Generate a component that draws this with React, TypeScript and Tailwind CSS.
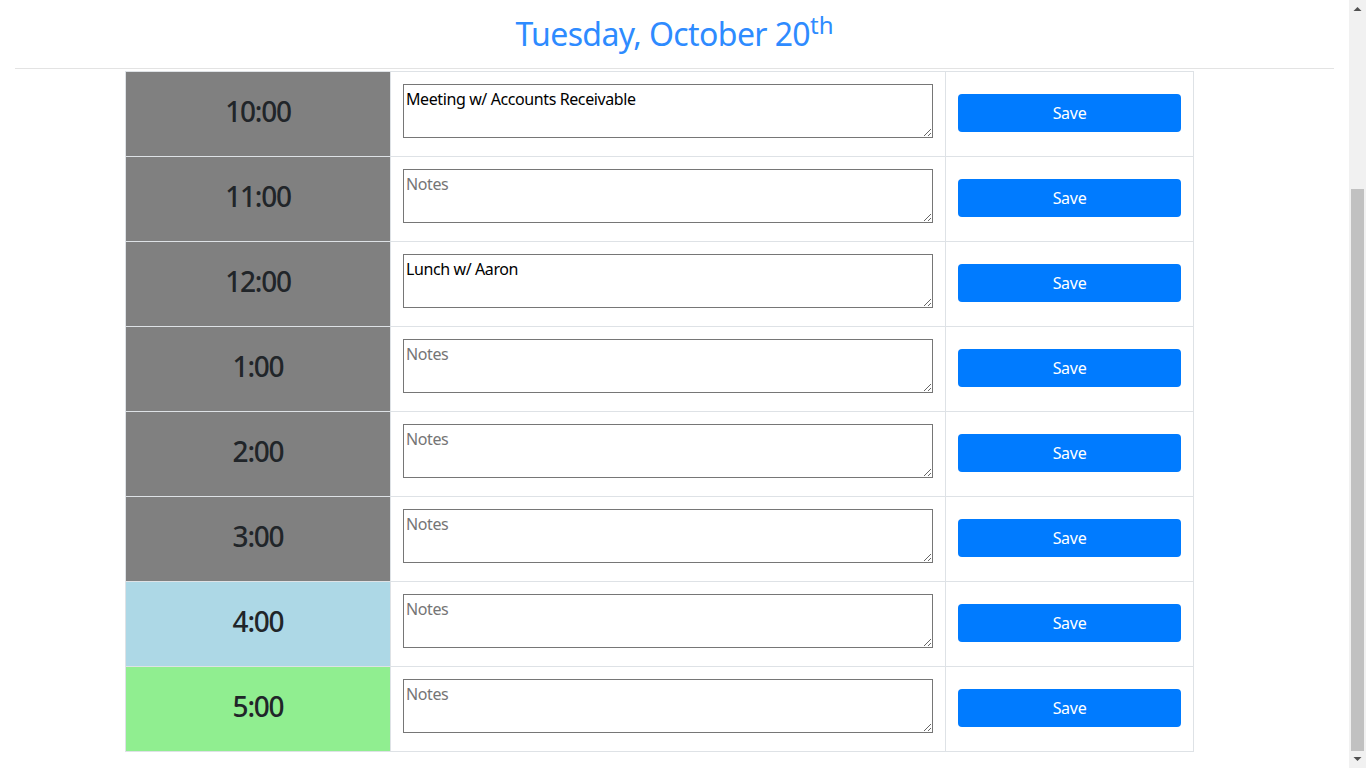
import React from "react";

type Row = { time: string; note: string; state: "past" | "present" | "future" };

const rows: Row[] = [
  { time: "10:00", note: "Meeting w/ Accounts Receivable", state: "past" },
  { time: "11:00", note: "", state: "past" },
  { time: "12:00", note: "Lunch w/ Aaron", state: "past" },
  { time: "1:00", note: "", state: "past" },
  { time: "2:00", note: "", state: "past" },
  { time: "3:00", note: "", state: "past" },
  { time: "4:00", note: "", state: "present" },
  { time: "5:00", note: "", state: "future" },
];

const stateBg: Record<Row["state"], string> = {
  past: "bg-[#808080]",
  present: "bg-[#add8e6]",
  future: "bg-[#90ee90]",
};

const FONT = "font-['Noto_Sans','Open_Sans',sans-serif]";

function FakeScrollbar() {
  return (
    <div className="flex h-screen w-[17px] shrink-0 flex-col bg-[#f1f1f1]">
      <div className="h-[17px] shrink-0">
        <svg width="17" height="17" viewBox="0 0 17 17">
          <polygon points="4.5,11 8.5,7 12.5,11" fill="#505050" />
        </svg>
      </div>
      <div className="h-[172px] shrink-0" />
      <div className="mx-[2px] h-[562px] shrink-0 bg-[#c1c1c1]" />
      <div className="flex-1" />
      <div className="h-[17px] shrink-0">
        <svg width="17" height="17" viewBox="0 0 17 17">
          <polygon points="4.5,6 12.5,6 8.5,10" fill="#505050" />
        </svg>
      </div>
    </div>
  );
}

export default function App() {
  return (
    <div className={`${FONT} flex h-screen overflow-hidden bg-white text-[#212529]`}>
      <main className="flex min-w-0 flex-1 flex-col">
        <header className="flex h-[69px] shrink-0 flex-col bg-white">
          <div className="flex flex-1 items-start justify-center pt-[15px]">
            <p className="text-[32px] leading-[1.2] tracking-[-0.6px] text-[#2e8bff]">
              Tuesday, October 20<sup className="text-[24px] tracking-normal">th</sup>
            </p>
          </div>
          <hr className="mx-[15px] border-t border-[#e3e3e3]" />
        </header>

        <div className="ml-[125px] mt-[2px] w-[1069px] border-l border-t border-[#dee2e6]">
          {rows.map((r) => (
            <div key={r.time} className="flex h-[85px]">
              <div
                className={`flex w-[265px] items-center justify-center border-b border-r border-[#dee2e6] pb-[5px] ${stateBg[r.state]}`}
              >
                <span className="text-[28px] font-medium leading-[1.2] tracking-[-1.2px] text-[#212529]">
                  {r.time}
                </span>
              </div>
              <div className="w-[555px] border-b border-r border-[#dee2e6] px-[12px] pt-[12px]">
                <textarea
                  defaultValue={r.note}
                  placeholder="Notes"
                  className={`${FONT} block h-[54px] w-full border border-[#767676] bg-white px-[2px] py-[2px] text-[16px] leading-6 tracking-[-0.4px] text-black placeholder:text-[#757575]`}
                />
              </div>
              <div className="flex w-[248px] items-center border-b border-r border-[#dee2e6] px-[12px] pb-[2px]">
                <button
                  className={`${FONT} h-[38px] w-full rounded-[4px] bg-[#007bff] text-[16px] tracking-[-0.3px] text-white`}
                >
                  Save
                </button>
              </div>
            </div>
          ))}
        </div>
      </main>
      <FakeScrollbar />
    </div>
  );
}
